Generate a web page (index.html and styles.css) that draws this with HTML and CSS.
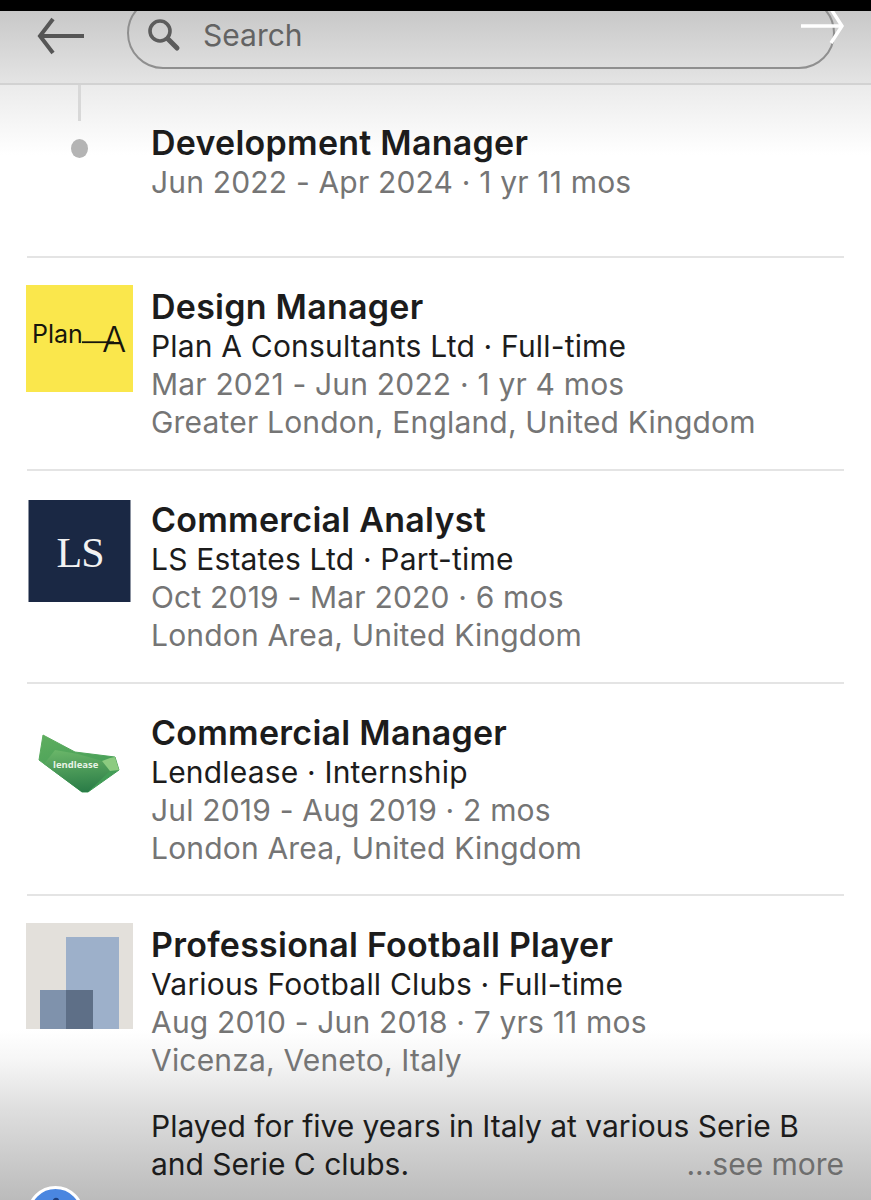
FILE: index.html
```html
<!DOCTYPE html>
<html lang="en">

<head>
    <meta charset="utf-8" />
    <title>Experience</title>
    <link rel="stylesheet" href="styles.css">
</head>

<body>
    <div class="statusbar"></div>

    <header class="topbar">
        <svg class="back" width="50" height="38" viewBox="0 0 50 38" fill="none" stroke="#565656" stroke-width="4">
            <polyline points="16 2 3 19 16 36" />
            <line x1="3" y1="19" x2="47" y2="19" />
        </svg>
        <div class="search">
            <svg width="36" height="36" viewBox="0 0 36 36" fill="none" stroke="#5c5c5c">
                <circle cx="14" cy="14" r="10" stroke-width="3.6" />
                <line x1="22" y1="22" x2="31" y2="31" stroke-width="5" stroke-linecap="round" />
            </svg>
            <span>Search</span>
        </div>
        <svg class="forward" width="44" height="34" viewBox="0 0 44 34" fill="none" stroke="#fff" stroke-width="3.4">
            <line x1="0" y1="15" x2="41" y2="15" />
            <polyline points="30 -2 41 15 30 32" />
        </svg>
    </header>

    <main>
        <section class="row first">
            <div class="timeline">
                <span class="timeline-line"></span>
                <span class="timeline-dot"></span>
            </div>
            <div class="info">
                <h2>Development Manager</h2>
                <p class="muted">Jun 2022 - Apr 2024 · 1 yr 11 mos</p>
            </div>
        </section>

        <section class="row">
            <svg class="logo" width="107" height="107" viewBox="0 0 107 107">
                <rect width="107" height="107" fill="#fae74c" />
                <text x="6" y="58" class="plan-word">Plan</text>
                <line x1="56" y1="57.2" x2="88" y2="57.2" stroke="#16160c" stroke-width="1.8" />
                <text x="88" y="67" text-anchor="middle" class="plan-a">A</text>
            </svg>
            <div class="info">
                <h2>Design Manager</h2>
                <p>Plan A Consultants Ltd · Full-time</p>
                <p class="muted">Mar 2021 - Jun 2022 · 1 yr 4 mos</p>
                <p class="muted">Greater London, England, United Kingdom</p>
            </div>
        </section>

        <section class="row">
            <svg class="logo" width="107" height="107" viewBox="0 0 107 107">
                <rect x="2.5" y="2" width="102" height="102" fill="#1a2844" />
                <text x="54" y="69" text-anchor="middle" class="ls-word">LS</text>
            </svg>
            <div class="info">
                <h2>Commercial Analyst</h2>
                <p>LS Estates Ltd · Part-time</p>
                <p class="muted">Oct 2019 - Mar 2020 · 6 mos</p>
                <p class="muted">London Area, United Kingdom</p>
            </div>
        </section>

        <section class="row short">
            <svg class="logo" width="107" height="107" viewBox="0 0 107 107">
                <defs>
                    <linearGradient id="leaf" x1="0" y1="0" x2="0.4" y2="1">
                        <stop offset="0" stop-color="#5fae5f" />
                        <stop offset="1" stop-color="#3f9a55" />
                    </linearGradient>
                    <linearGradient id="fold" x1="0.4" y1="0" x2="0.5" y2="1">
                        <stop offset="0" stop-color="#69b568" />
                        <stop offset="1" stop-color="#2a7c47" />
                    </linearGradient>
                </defs>
                <polygon points="17,24 49,41 89,46 93,59 62,81 56,81 13,49" fill="url(#leaf)" stroke="url(#leaf)" stroke-width="1" stroke-linejoin="round" />
                <polygon points="29,39 52,43 76,50 84,60 62,81 56,81 18,53" fill="url(#fold)" />
                <polygon points="84,47 89,46 93,59 84,60 76,50" fill="#8ccb80" />
                <text x="27" y="57" class="lend-word">lendlease</text>
            </svg>
            <div class="info">
                <h2>Commercial Manager</h2>
                <p>Lendlease · Internship</p>
                <p class="muted">Jul 2019 - Aug 2019 · 2 mos</p>
                <p class="muted">London Area, United Kingdom</p>
            </div>
        </section>

        <section class="row last">
            <svg class="logo" width="107" height="106" viewBox="0 0 107 106">
                <rect width="107" height="106" fill="#e3e0db" />
                <rect x="40" y="14" width="53" height="92" fill="#9db0ca" />
                <rect x="14" y="67" width="53" height="39" fill="#7f92ac" />
                <rect x="40" y="67" width="27" height="39" fill="#5e6f87" />
            </svg>
            <div class="info">
                <h2>Professional Football Player</h2>
                <p>Various Football Clubs · Full-time</p>
                <p class="muted">Aug 2010 - Jun 2018 · 7 yrs 11 mos</p>
                <p class="muted">Vicenza, Veneto, Italy</p>
                <div class="desc">
                    <p>Played for five years in Italy at various Serie B</p>
                    <p class="desc-last">and Serie C clubs. <span class="more">...see more</span></p>
                </div>
            </div>
        </section>
    </main>

    <div class="fab">
        <svg width="14" height="14" viewBox="0 0 14 14" fill="none" stroke="#1d3f7e" stroke-width="2.4">
            <path d="M3 14 L5 4 A2 2 0 0 1 9 4 L11 14" />
        </svg>
    </div>
</body>

</html>
```

FILE: styles.css
```css
* {
    box-sizing: border-box;
}

html,
body {
    margin: 0;
    height: 1200px;
    overflow: hidden;
}

body {
    position: relative;
    font-family: Inter, "Liberation Sans", sans-serif;
    color: #1c1c1c;
    background: linear-gradient(#fff 1030px, #f6f6f6 1060px, #dedede 1110px, #bbb 1200px);
}

.statusbar {
    height: 11px;
    background: #000;
}

/* top bar + the fade under it */
.topbar {
    position: relative;
    height: 74px;
    display: flex;
    align-items: flex-end;
    padding: 0 36px 14px 37px;
    gap: 40px;
    overflow: hidden;
    background: linear-gradient(#c8c8c8, #e4e4e4);
    border-bottom: 2px solid #d2d2d2;
}

.back {
    flex: none;
    margin-bottom: 14px;
}

.search {
    flex: 1;
    height: 72px;
    display: flex;
    align-items: center;
    gap: 21px;
    padding: 4px 0 0 17px;
    border: 2px solid #8f8f8f;
    border-radius: 36px;
    font-size: 30px;
    color: #636363;
}

.forward {
    position: absolute;
    top: 0;
    right: 26px;
}

main {
    padding: 0 27px;
    background: linear-gradient(#ebebeb, #fff) no-repeat;
    background-size: 100% 70px;
}

.row {
    display: flex;
    height: 213px;
    padding-top: 27px;
    border-bottom: 2px solid #e4e4e4;
}

.row.first {
    height: 173px;
    padding-top: 0;
}

.row.short {
    height: 212px;
}

.row.last {
    height: auto;
    border-bottom: none;
}

.logo {
    flex: none;
    margin: 0 18px 0 -1px;
}

.timeline {
    flex: none;
    width: 104px;
    margin-right: 20px;
    display: flex;
    flex-direction: column;
    align-items: center;
}

.timeline-line {
    width: 3px;
    height: 36px;
    background: #d8d8d8;
}

.timeline-dot {
    width: 17px;
    height: 19px;
    margin-top: 18px;
    border-radius: 50%;
    background: #b4b4b4;
}

.info {
    flex: 1;
    padding-top: 2px;
}

.first .info {
    padding-top: 38px;
}

h2 {
    margin: 0;
    font-size: 34px;
    font-weight: 600;
    line-height: 40px;
    letter-spacing: 0.25px;
    white-space: nowrap;
}

.info p {
    margin: 0;
    font-size: 30px;
    line-height: 38px;
    letter-spacing: 0.18px;
    white-space: nowrap;
}

.info p.muted {
    color: #757575;
}

.desc {
    margin-top: 28px;
}

.info .desc p {
    letter-spacing: -0.02px;
}

.desc-last {
    display: flex;
    justify-content: space-between;
}

.more {
    color: #6e6e6e;
}

/* logo text */
.plan-word {
    font-size: 25px;
    fill: #16160c;
}

.plan-a {
    font-size: 36px;
    font-weight: 300;
    fill: #16160c;
}

.ls-word {
    font-family: "Liberation Serif", serif;
    font-size: 42px;
    letter-spacing: -1px;
    fill: #f2f2f2;
}

.lend-word {
    font-family: "Open Sans", sans-serif;
    font-size: 9.5px;
    font-weight: 700;
    fill: #e8f3e6;
}

.fab {
    position: absolute;
    left: 27px;
    top: 1186px;
    width: 57px;
    height: 57px;
    display: flex;
    justify-content: center;
    padding-top: 8px;
    border-radius: 50%;
    background: #4a86e0;
    border: 3px solid #fff;
}
```
